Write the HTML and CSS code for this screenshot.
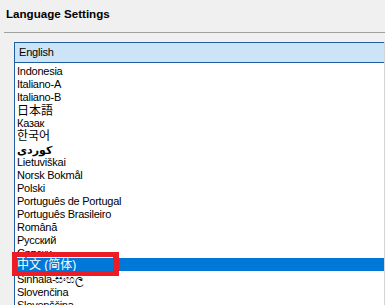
FILE: index.html
```html
<!DOCTYPE html>
<html lang="en">
<head>
    <meta charset="UTF-8">
    <meta name="viewport" content="width=device-width, initial-scale=1.0">
    <title>Language Settings</title>
    <link rel="stylesheet" href="styles.css">
</head>
<body>

    <div class="header">
        <h1>Language Settings</h1>
    </div>
    <div class="divider"></div>

    <div class="listbox">
        <div class="current">English</div>
        <ul class="options">
            <li>Indonesia</li>
            <li>Italiano-A</li>
            <li>Italiano-B</li>
            <li class="cjk" lang="ja">日本語</li>
            <li>Казак</li>
            <li class="cjk" lang="ko">한국어</li>
            <li class="arabic" lang="ckb">کوردی</li>
            <li>Lietuviškai</li>
            <li>Norsk Bokmål</li>
            <li>Polski</li>
            <li>Português de Portugal</li>
            <li>Português Brasileiro</li>
            <li>Română</li>
            <li>Русский</li>
            <li>Српски</li>
            <li class="cjk selected marked" lang="zh-CN">中文 (简体)</li>
            <li>Sinhala-සිංහල</li>
            <li>Slovenčina</li>
            <li>Slovenščina</li>
        </ul>
    </div>

</body>
</html>
```

FILE: styles.css
```css
body {
    font-family: 'Liberation Sans', Arial, sans-serif;
    background-color: #f0f0f0;
    margin: 0;
    overflow: hidden;
}
.header {
    height: 32px;
    padding-left: 6px;
}
h1 {
    margin: 0;
    padding-top: 7px;
    font-size: 11.6px;
    font-weight: bold;
    color: #000;
}
.divider {
    margin-left: 4px;
    border-top: 1px solid #a0a0a0;
}
.listbox {
    margin: 9px 0 0 14px;
    background-color: #fff;
    border-left: 1px solid #1f5f9f;
    border-right: 1px solid #d4d4d4;
}
.current {
    height: 19px;
    line-height: 19px;
    margin-left: -1px;
    padding-left: 4px;
    background-color: #cce4f7;
    border-top: 1px solid #1f5f9f;
    border-bottom: 1px solid #1f5f9f;
    border-left: 1px solid #1f5f9f;
    font-size: 11px;
    letter-spacing: -0.2px;
}
.options {
    list-style: none;
    margin: 0;
    padding: 0;
    font-size: 11px;
    letter-spacing: -0.25px;
    color: #000;
}
.options li {
    height: 13px;
    line-height: 17px;
    padding-left: 2px;
    white-space: nowrap;
}
.options .cjk {
    font-family: 'Liberation Sans', 'Noto Sans CJK JP', sans-serif;
    font-size: 12px;
    letter-spacing: 0;
    line-height: 19px;
}
.options .cjk[lang="ko"] {
    font-family: 'Liberation Sans', 'Noto Sans CJK KR', sans-serif;
    line-height: 17px;
}
.options .cjk[lang="zh-CN"] {
    font-family: 'Liberation Sans', 'Noto Sans CJK SC', sans-serif;
    line-height: 14px;
}
.options .arabic {
    font-family: 'DejaVu Sans', sans-serif;
    font-weight: bold;
    letter-spacing: 0;
    line-height: 19px;
}
.options .selected {
    background-color: #0078d7;
    color: #fff;
}
.marked {
    position: relative;
}
.marked::after {
    content: "";
    position: absolute;
    left: -3px;
    top: -6px;
    width: 96px;
    height: 14px;
    border: 5px solid #ec1c24;
    border-right-width: 6px;
}
```
